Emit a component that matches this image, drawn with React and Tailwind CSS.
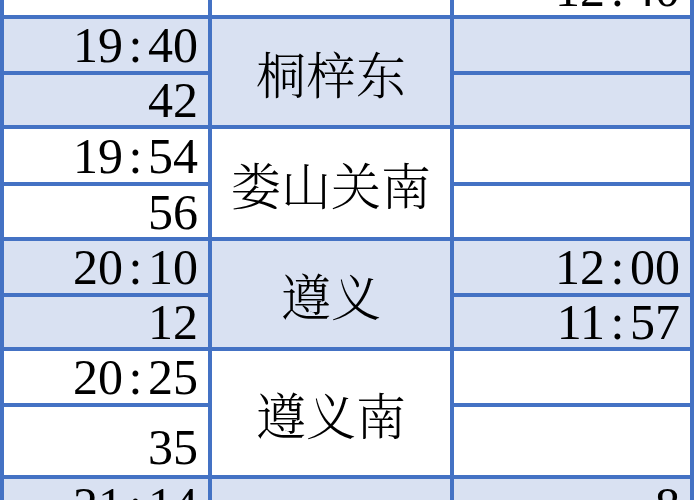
import React from 'react'

const digitFont = "font-['Liberation_Serif','Times_New_Roman',serif]"
const cjkFont = "font-['Noto_Serif_CJK_SC','Noto_Sans_CJK_SC',serif]"

function Time({ value }) {
  // every glyph sits on a half-em grid, colon included
  const parts = value.split(':')
  if (parts.length === 1) return <span>{value}</span>
  return (
    <span>
      {parts[0]}
      <span className="inline-block w-[0.5em] text-center">:</span>
      {parts[1]}
    </span>
  )
}

function TimeCell({ value, fill, bottom }) {
  return (
    <div className={`${fill} flex justify-end pr-[10px] ${bottom ? 'items-end pb-[3px]' : 'items-center'} text-[50px] leading-none text-black ${digitFont}`}>
      {value ? <Time value={value} /> : null}
    </div>
  )
}

function StationCell({ name, fill }) {
  return (
    <div className={`${fill} row-span-2 flex items-center justify-center text-[50px] leading-none text-black font-light ${cjkFont}`}>
      {name}
    </div>
  )
}

const stops = [
  { name: '桐梓东', arrive: '19:40', leave: '42', back1: '', back2: '', fill: 'bg-[#d9e1f2]' },
  { name: '娄山关南', arrive: '19:54', leave: '56', back1: '', back2: '', fill: 'bg-white' },
  { name: '遵义', arrive: '20:10', leave: '12', back1: '12:00', back2: '11:57', fill: 'bg-[#d9e1f2]' },
  { name: '遵义南', arrive: '20:25', leave: '35', back1: '', back2: '', fill: 'bg-white', tall: true },
  { name: '', arrive: '21:14', leave: '', back1: '8', back2: '', fill: 'bg-[#d9e1f2]' },
]

export default function App() {
  return (
    <div className="w-[700px] h-[500px] overflow-hidden bg-white">
      <div className="-mt-[37px] w-[694px] bg-[#4472c4] px-[4px] grid grid-cols-[204px_238px_236px] grid-rows-[52px_52px_50px_53px_51px_52px_50px_52px_68px_52px_52px] gap-[4px]">
        <TimeCell value="" fill="bg-white" />
        <div className="bg-white"></div>
        <TimeCell value="12:40" fill="bg-white" />
        {stops.map((s, i) => (
          <React.Fragment key={i}>
            <TimeCell value={s.arrive} fill={s.fill} />
            <StationCell name={s.name} fill={s.fill} />
            <TimeCell value={s.back1} fill={s.fill} />
            <TimeCell value={s.leave} fill={s.fill} bottom={s.tall} />
            <TimeCell value={s.back2} fill={s.fill} />
          </React.Fragment>
        ))}
      </div>
    </div>
  )
}
